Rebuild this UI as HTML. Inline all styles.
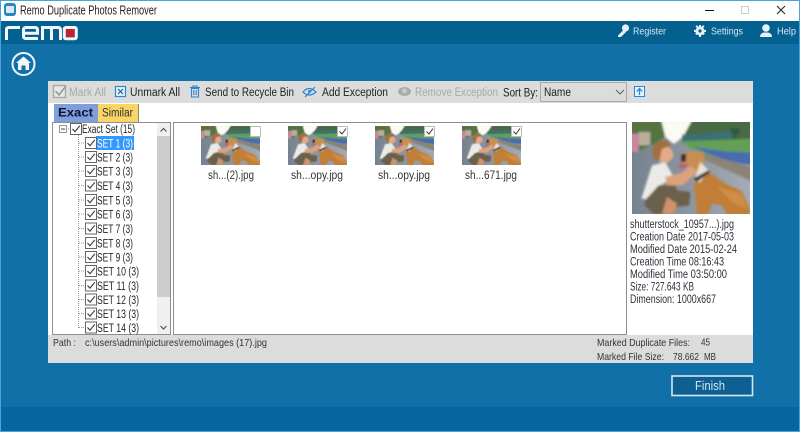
<!DOCTYPE html>
<html><head><meta charset="utf-8"><title>Remo Duplicate Photos Remover</title>
<style>
html,body{margin:0;padding:0;background:#1270a8;width:800px;height:432px;overflow:hidden}
svg{display:block}
text{font-family:"Liberation Sans",sans-serif;font-size:11.5px;fill:#222}
.g{fill:#a9a9a9}
.w{fill:#d6e6f1;font-size:10.5px}
.t{font-size:11.5px;fill:#262626}
.p{font-size:11.5px;fill:#30303a}
.s{font-size:10.5px;fill:#333}
</style></head><body>
<svg width="800" height="432" viewBox="0 0 800 432" xmlns="http://www.w3.org/2000/svg">
<defs>
<filter id="b" x="-5%" y="-5%" width="110%" height="110%"><feGaussianBlur stdDeviation="3.200"/></filter>
<clipPath id="c"><rect width="354" height="276"/></clipPath>
<linearGradient id="rd" x1="0" x2="1" y1="0" y2="0"><stop offset="0" stop-color="#76828f"/><stop offset="1" stop-color="#a4abb4"/></linearGradient>
<symbol id="photo" viewBox="0 0 354 276" preserveAspectRatio="none">
<g clip-path="url(#c)"><rect width="354" height="276" fill="url(#rd)"/>
<g filter="url(#b)">
<path d="M-5 -5H100V45L60 70L-5 95Z" fill="#56733f"/>
<path d="M-5 35H20V90H-5Z" fill="#c888a0"/><path d="M20 30H55V70H20Z" fill="#b9ad9c"/>
<path d="M88 -5H182L165 30L140 55L125 66L100 45Z" fill="#fbfbf2"/>
<path d="M150 50L180 -5H360V55L150 58Z" fill="#4a6a44"/>
<path d="M150 38L300 28V50L150 58Z" fill="#3b6f74"/>
<path d="M296 18H322V35H312V62H304V35H296Z" fill="#2b5a42"/>
<path d="M145 58L360 50V128L220 98L175 80Z" fill="#62a058"/>
<path d="M185 75L280 88L360 92V130L290 118L220 92Z" fill="#4a6cb0"/>
<path d="M215 95L360 135V178L215 112Z" fill="#8a8377"/>
<path d="M28 230L60 130L100 120L125 165L100 182L75 195L45 232Z" fill="#eaeae7"/>
<path d="M38 236L80 190L130 190L135 205L175 210L172 250L130 255L100 276H65L38 250Z" fill="#6a604c"/>
<path d="M90 276L105 225L135 245L125 276Z" fill="#cf936b"/>
<path d="M100 165L150 152L182 125L205 133L195 152L150 190L105 190Z" fill="#dca27c"/>
<path d="M80 78L105 68L122 88L125 105L108 122H85Z" fill="#e2aa88"/>
<path d="M62 100C56 70 80 50 110 55L116 72L90 80L82 115L68 115Z" fill="#a06f3c"/>
<path d="M185 180L230 150L280 185L330 208L354 262V280H285L270 250L240 245L225 280H195Z" fill="#c07e38"/>
<path d="M148 95L175 88L215 90L218 130L195 150L175 130L150 125Z" fill="#c88f52"/>
<path d="M148 96L163 96L161 120L148 120Z" fill="#3c2f2c"/>
<path d="M135 126L172 125L150 142Z" fill="#c65a70"/>
<path d="M205 120L230 145L205 180L185 180L195 150Z" fill="#e8e2d8"/>
<path d="M184 170L230 144L233 152L192 182Z" fill="#3b3a3c"/>
<path d="M255 195L330 215L345 262L300 240Z" fill="#cf8d45"/>
</g></g></symbol>
<symbol id="cb" viewBox="0 0 12 12"><rect x=".5" y=".5" width="11" height="11" fill="#fff" stroke="#666"/><path d="M2.5 6L5 8.7L9.8 2.8" fill="none" stroke="#333" stroke-width="1.1"/></symbol>
</defs>

<!-- chrome -->
<rect width="800" height="432" fill="#1270a8"/>
<rect x="1" y="1" width="798" height="20" fill="#fff"/>
<rect x="0" y="0" width="800" height="1" fill="#49a3dc"/>
<rect x="1" y="21" width="798" height="23" fill="#04608f"/>
<rect x="0" y="407" width="800" height="25" fill="#06649e"/>
<rect x="0" y="0" width="1" height="432" fill="#49a3dc"/><rect x="799" y="0" width="1" height="432" fill="#49a3dc"/>
<rect x="0" y="431" width="800" height="1" fill="#49a3dc"/>

<!-- title icon -->
<rect x="4" y="3" width="12" height="13" rx="3" fill="#2a86bd"/><rect x="6" y="6" width="8" height="7" rx="1" fill="#dbe9f2"/>
<text x="20" y="14.5" textLength="137" lengthAdjust="spacingAndGlyphs" style="font-size:12.5px;fill:#2a1a20">Remo Duplicate Photos Remover</text>
<rect x="705" y="10" width="9" height="1" fill="#111"/>
<rect x="741.5" y="6.5" width="7" height="7" fill="none" stroke="#ccc"/>
<path d="M777 6L785 14M785 6L777 14" stroke="#222" stroke-width="1"/>

<!-- logo -->
<g fill="none" stroke="#f1f6fa" stroke-width="3">
<path d="M6.500 40V29.500Q6.500 27.500 9 27.500H20"/>
<path d="M38 38.500H26Q23.500 38.500 23.500 36V30Q23.500 27.500 26 27.500H35Q37.500 27.500 37.500 30V33.300H24"/>
<path d="M42.500 40V27.500H58Q60.500 27.500 60.500 30V40M51.500 27.500V40"/>
<rect x="64.300" y="27.500" width="12" height="11.200" rx="1.500"/>
</g>
<rect x="66" y="29" width="8.500" height="8.200" fill="#c5202f"/>

<!-- header items -->
<g fill="#e6f0f6">
<circle cx="625.500" cy="28" r="3.600"/><path d="M623.500 30L618 35.500V37H621L626 32Z"/>
<circle cx="700" cy="31" r="4.500"/>
<path d="M694 30h12v2h-12zM699 25h2v12h-2zM695.500 26.500l1.400-1.400 8 8.500-1.400 1.400zM704.500 26.500l-1.400-1.400-8 8.500 1.400 1.400z"/>
<circle cx="766" cy="28" r="3.800"/><path d="M760 37Q760 33 764 32.500H768Q772 33 772 37Z"/>
</g>
<circle cx="700" cy="31" r="1.600" fill="#04608f"/>
<text class="w" x="633" y="34.500" textLength="33" lengthAdjust="spacingAndGlyphs">Register</text>
<text class="w" x="711" y="34.500" textLength="32" lengthAdjust="spacingAndGlyphs">Settings</text>
<text class="w" x="777" y="34.500" textLength="19" lengthAdjust="spacingAndGlyphs">Help</text>

<!-- home -->
<circle cx="23.500" cy="64" r="11" fill="none" stroke="#f1f6fa" stroke-width="2"/>
<path d="M23.500 56.500L31 63H29V70H25.500V65.500H21.500V70H18V63H16Z" fill="#f1f6fa"/>

<!-- panel -->
<rect x="48" y="81" width="705" height="282" fill="#fff"/>
<rect x="48" y="81" width="705" height="22" fill="#dcdcdc"/>
<rect x="48" y="335" width="705" height="28" fill="#dcdcdc"/>

<!-- toolbar -->
<rect x="53.500" y="85.500" width="12" height="12" fill="#e8e8e8" stroke="#a8a8a8" stroke-width="1.400"/>
<path d="M55.500 91L59 95L65.500 86.500" fill="none" stroke="#999" stroke-width="1.600"/>
<text class="g" x="69" y="96" textLength="37" lengthAdjust="spacingAndGlyphs">Mark All</text>
<rect x="115.500" y="86.500" width="10" height="10" fill="#e8f2fa" stroke="#2a87d0" stroke-width="1.200"/>
<path d="M118 89L123 94M123 89L118 94" stroke="#1f5f9e" stroke-width="1.200"/>
<text x="130" y="96" textLength="50" lengthAdjust="spacingAndGlyphs">Unmark All</text>
<path d="M191.500 88.500H198.500V97H191.500ZM190 87.500H200M193 87.500V86H197V87.500M193.800 90V95M196.200 90V95" fill="none" stroke="#2a87d0" stroke-width="1.100"/>
<text x="205" y="96" textLength="89" lengthAdjust="spacingAndGlyphs">Send to Recycle Bin</text>
<path d="M303 92Q309 85 316 92Q309 98 303 92Z" fill="none" stroke="#2a87d0" stroke-width="1.200"/>
<path d="M305 97L315 87" stroke="#2a87d0" stroke-width="1.200"/><circle cx="309.500" cy="91.500" r="1.500" fill="#2a87d0"/>
<text x="322" y="96" textLength="66" lengthAdjust="spacingAndGlyphs">Add Exception</text>
<ellipse cx="404.500" cy="91.500" rx="6.500" ry="4.500" fill="#aaa"/><circle cx="404.500" cy="91" r="2.500" fill="#c8c8c8"/>
<text class="g" x="415" y="96" textLength="83" lengthAdjust="spacingAndGlyphs">Remove Exception</text>
<text x="503" y="96.500" textLength="35" lengthAdjust="spacingAndGlyphs">Sort By:</text>
<rect x="540.500" y="82.500" width="86" height="19" fill="#dcdcdc" stroke="#a8a8a8"/>
<text x="544" y="96" textLength="27" lengthAdjust="spacingAndGlyphs">Name</text>
<path d="M616 90L620 94L624 90" fill="none" stroke="#666" stroke-width="1.100"/>
<rect x="634.500" y="86.500" width="10" height="10" fill="#eaf3fa" stroke="#2a87d0"/>
<path d="M639.500 95V89M636.800 91.500L639.500 88.500L642.200 91.500" fill="none" stroke="#2a87d0" stroke-width="1.300"/>

<!-- tabs -->
<rect x="54" y="104" width="44" height="18" fill="#7f9fdc"/>
<text x="58" y="116.500" textLength="35" lengthAdjust="spacingAndGlyphs" style="font-weight:bold;font-size:12px;fill:#0e1330">Exact</text>
<rect x="98" y="104" width="40" height="18" fill="#fbd468"/>
<path d="M138.500 104V122.500H98" fill="none" stroke="#8a8a80"/>
<text x="102" y="116.500" textLength="31" lengthAdjust="spacingAndGlyphs" style="fill:#333">Similar</text>

<!-- tree box -->
<rect x="52.500" y="122.500" width="118" height="212" fill="#fff" stroke="#8e8e8e"/>
<rect x="157" y="123" width="13" height="211" fill="#f0f0f0"/>
<rect x="157" y="136" width="13" height="161" fill="#cdcdcd"/>
<path d="M160.500 131.500L163.500 128.500L166.500 131.500M160.500 326L163.500 329L166.500 326" fill="none" stroke="#555" stroke-width="1.200"/>
<rect x="59.500" y="125.500" width="7" height="7" fill="#fff" stroke="#999"/><path d="M61 129H65" stroke="#444"/>
<path d="M66 129H70M78.500 133V328" stroke="#999" stroke-dasharray="1 1" fill="none"/>
<use href="#cb" x="70" y="123" width="12" height="12"/>
<text class="t" x="82" y="133" textLength="53" lengthAdjust="spacingAndGlyphs">Exact Set (15)</text>
<rect x="96" y="136" width="38" height="14" fill="#3399ff"/>

<g stroke="#999" stroke-dasharray="1 1">
<path d="M79 143H85M79 157H85M79 171H85M79 185.500H85M79 200H85M79 214H85M79 228.500H85M79 243H85M79 257H85M79 271H85M79 285.500H85M79 299.500H85M79 313.500H85M79 327.500H85"/>
</g>
<use href="#cb" x="85" y="137" width="12" height="12"/>
<use href="#cb" x="85" y="151" width="12" height="12"/>
<use href="#cb" x="85" y="165" width="12" height="12"/>
<use href="#cb" x="85" y="179.500" width="12" height="12"/>
<use href="#cb" x="85" y="194" width="12" height="12"/>
<use href="#cb" x="85" y="208" width="12" height="12"/>
<use href="#cb" x="85" y="222.500" width="12" height="12"/>
<use href="#cb" x="85" y="237" width="12" height="12"/>
<use href="#cb" x="85" y="251" width="12" height="12"/>
<use href="#cb" x="85" y="265" width="12" height="12"/>
<use href="#cb" x="85" y="279.500" width="12" height="12"/>
<use href="#cb" x="85" y="293.500" width="12" height="12"/>
<use href="#cb" x="85" y="307.500" width="12" height="12"/>
<use href="#cb" x="85" y="321.500" width="12" height="12"/>
<text class="t" x="97" y="147.500" textLength="36" lengthAdjust="spacingAndGlyphs" style="fill:#fff">SET 1 (3)</text>
<text class="t" x="97" y="161.500" textLength="36" lengthAdjust="spacingAndGlyphs">SET 2 (3)</text>
<text class="t" x="97" y="175.500" textLength="36" lengthAdjust="spacingAndGlyphs">SET 3 (3)</text>
<text class="t" x="97" y="190" textLength="36" lengthAdjust="spacingAndGlyphs">SET 4 (3)</text>
<text class="t" x="97" y="204.500" textLength="36" lengthAdjust="spacingAndGlyphs">SET 5 (3)</text>
<text class="t" x="97" y="218.500" textLength="36" lengthAdjust="spacingAndGlyphs">SET 6 (3)</text>
<text class="t" x="97" y="233" textLength="36" lengthAdjust="spacingAndGlyphs">SET 7 (3)</text>
<text class="t" x="97" y="247.500" textLength="36" lengthAdjust="spacingAndGlyphs">SET 8 (3)</text>
<text class="t" x="97" y="261.500" textLength="36" lengthAdjust="spacingAndGlyphs">SET 9 (3)</text>
<text class="t" x="97" y="275.500" textLength="42" lengthAdjust="spacingAndGlyphs">SET 10 (3)</text>
<text class="t" x="97" y="290" textLength="42" lengthAdjust="spacingAndGlyphs">SET 11 (3)</text>
<text class="t" x="97" y="304" textLength="42" lengthAdjust="spacingAndGlyphs">SET 12 (3)</text>
<text class="t" x="97" y="318" textLength="42" lengthAdjust="spacingAndGlyphs">SET 13 (3)</text>
<text class="t" x="97" y="332" textLength="42" lengthAdjust="spacingAndGlyphs">SET 14 (3)</text>

<!-- grid -->
<rect x="173.500" y="122.500" width="453" height="212" fill="#fff" stroke="#8e8e8e"/>
<use href="#photo" x="201" y="126" width="59" height="39"/>
<use href="#photo" x="288" y="126" width="59" height="39"/>
<use href="#photo" x="375" y="126" width="59" height="39"/>
<use href="#photo" x="462" y="126" width="59" height="39"/>
<rect x="250.500" y="126.500" width="10" height="10" fill="#fff" stroke="#bbb"/>
<rect x="337.500" y="126.500" width="10" height="10" fill="#fff" stroke="#bbb"/>
<path d="M339.500 131.500L342 134L346 128.500" fill="none" stroke="#333"/>
<rect x="424.500" y="126.500" width="10" height="10" fill="#fff" stroke="#bbb"/>
<path d="M426.500 131.500L429 134L433 128.500" fill="none" stroke="#333"/>
<rect x="511.500" y="126.500" width="10" height="10" fill="#fff" stroke="#bbb"/>
<path d="M513.500 131.500L516 134L520 128.500" fill="none" stroke="#333"/>
<text x="208" y="179" textLength="46" lengthAdjust="spacingAndGlyphs" style="fill:#333">sh...(2).jpg</text>
<text x="291" y="179" textLength="52" lengthAdjust="spacingAndGlyphs" style="fill:#333">sh...opy.jpg</text>
<text x="378" y="179" textLength="52" lengthAdjust="spacingAndGlyphs" style="fill:#333">sh...opy.jpg</text>
<text x="465" y="179" textLength="52" lengthAdjust="spacingAndGlyphs" style="fill:#333">sh...671.jpg</text>

<!-- preview -->
<use href="#photo" x="632" y="122" width="118" height="92"/>
<text class="p" x="630" y="228" textLength="104" lengthAdjust="spacingAndGlyphs">shutterstock_10957...).jpg</text>
<text class="p" x="630" y="240.500" textLength="104" lengthAdjust="spacingAndGlyphs">Creation Date 2017-05-03</text>
<text class="p" x="630" y="253" textLength="107" lengthAdjust="spacingAndGlyphs">Modified Date 2015-02-24</text>
<text class="p" x="630" y="265.500" textLength="94" lengthAdjust="spacingAndGlyphs">Creation Time 08:16:43</text>
<text class="p" x="630" y="278" textLength="97" lengthAdjust="spacingAndGlyphs">Modified Time 03:50:00</text>
<text class="p" x="630" y="290.500" textLength="64" lengthAdjust="spacingAndGlyphs">Size: 727.643 KB</text>
<text class="p" x="630" y="303" textLength="86" lengthAdjust="spacingAndGlyphs">Dimension: 1000x667</text>

<!-- status -->
<text class="s" x="53" y="346" textLength="23" lengthAdjust="spacingAndGlyphs">Path :</text>
<text class="s" x="85" y="346" textLength="182" lengthAdjust="spacingAndGlyphs">c:\users\admin\pictures\remo\images (17).jpg</text>
<text class="s" x="597" y="346" textLength="93" lengthAdjust="spacingAndGlyphs">Marked Duplicate Files:</text>
<text class="s" x="701" y="345.500" textLength="9" lengthAdjust="spacingAndGlyphs">45</text>
<text class="s" x="597" y="360" textLength="67" lengthAdjust="spacingAndGlyphs">Marked File Size:</text>
<text class="s" x="673" y="360" textLength="26" lengthAdjust="spacingAndGlyphs">78.662</text>
<text class="s" x="704" y="360" textLength="12" lengthAdjust="spacingAndGlyphs">MB</text>

<!-- finish -->
<rect x="672" y="376" width="80.500" height="19.500" fill="#0e5f92" stroke="#d5e8f2" stroke-width="1.600"/>
<text x="695" y="390" textLength="30" lengthAdjust="spacingAndGlyphs" style="font-size:12.500px;fill:#d2e6f1">Finish</text>
</svg>
</body></html>
